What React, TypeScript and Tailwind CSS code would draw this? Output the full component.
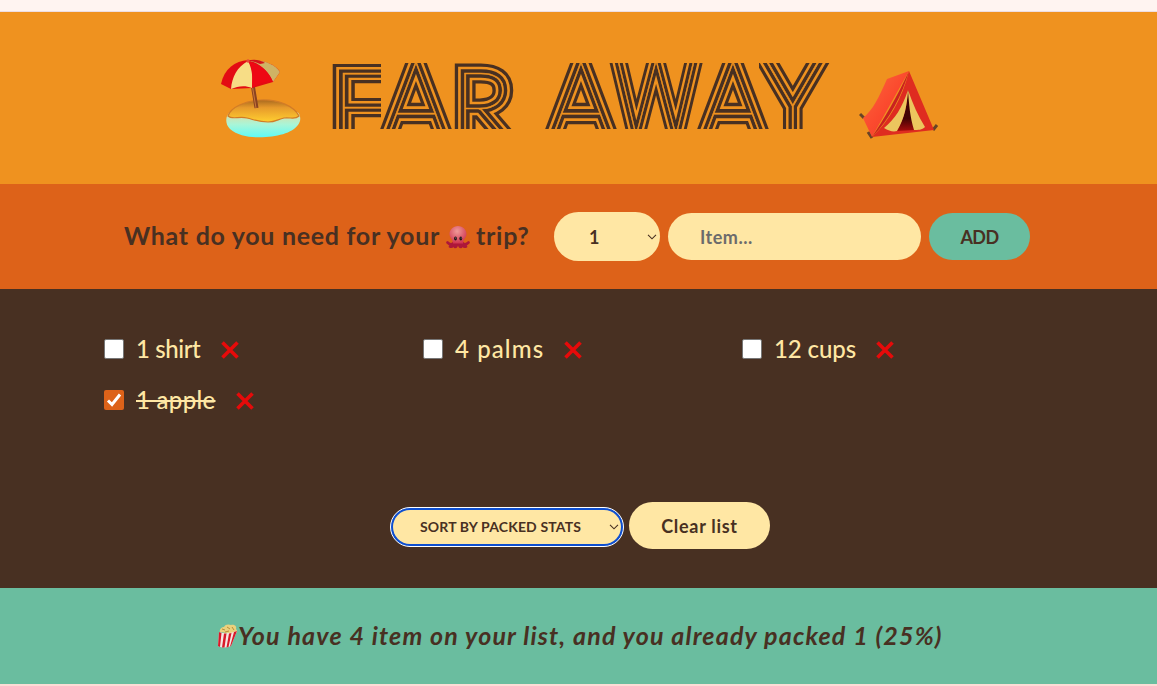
import React from "react";

const BROWN = "#483022";
const ORANGE = "#ef921f";

type Glyph = {
  id: string;
  ch: string;
  x: number;
  y: number;
  size: number;
  sx: number;
  clip: [number, number, number, number];
};

const glyphs: Glyph[] = [
  { id: "f", ch: "F", x: 330, y: 142, size: 98, sx: 1.15, clip: [328, 63, 53, 66] },
  { id: "a1", ch: "A", x: 383, y: 142, size: 115, sx: 0.9, clip: [374, 63, 90, 66] },
  { id: "r", ch: "R", x: 453, y: 142, size: 98, sx: 1.02, clip: [449, 63, 70, 66] },
  { id: "sp", ch: " ", x: 520, y: 142, size: 98, sx: 1, clip: [520, 63, 1, 1] },
  { id: "a2", ch: "A", x: 548, y: 142, size: 115, sx: 0.9, clip: [540, 63, 90, 66] },
  { id: "w", ch: "W", x: 615, y: 136, size: 108, sx: 0.76, clip: [606, 63, 102, 66] },
  { id: "a3", ch: "A", x: 700, y: 142, size: 115, sx: 0.9, clip: [691, 63, 90, 66] },
  { id: "y", ch: "Y", x: 762, y: 142, size: 120, sx: 0.9, clip: [759, 63, 75, 66] },
];

function Title() {
  return (
    <svg width="510" height="80" viewBox="325 56 510 80" role="img" aria-label="FAR AWAY">
      {glyphs.map((g) => (
        <g key={g.id}>
          <clipPath id={"clip-" + g.id}>
            <rect x={g.clip[0]} y={g.clip[1]} width={g.clip[2]} height={g.clip[3]} />
          </clipPath>
          <g clipPath={`url(#clip-${g.id})`} strokeLinejoin="miter">
            <g fill={BROWN} stroke={BROWN} strokeWidth="19.4">
              <text
                id={"glyph-" + g.id}
                transform={`translate(${g.x} ${g.y}) scale(${g.sx} 1)`}
                fontSize={g.size}
                fontFamily="Lato"
                fontWeight="100"
                vectorEffect="non-scaling-stroke"
                xmlSpace="preserve"
              >
                {g.ch}
              </text>
            </g>
            <use href={"#glyph-" + g.id} fill={ORANGE} stroke={ORANGE} strokeWidth="12.8" />
            <use href={"#glyph-" + g.id} fill={BROWN} stroke={BROWN} strokeWidth="7.6" />
            <use href={"#glyph-" + g.id} fill={ORANGE} stroke={ORANGE} strokeWidth="0.6" />
          </g>
        </g>
      ))}
    </svg>
  );
}

function Beach() {
  return (
    <svg width="80" height="80" viewBox="0 0 80 80">
      <defs>
        <linearGradient id="sea" x1="0" y1="0" x2="0" y2="1">
          <stop offset="0" stopColor="#e6d9a0" />
          <stop offset="0.5" stopColor="#a8f6d8" />
          <stop offset="1" stopColor="#5ffaf6" />
        </linearGradient>
        <linearGradient id="sand" x1="0" y1="0" x2="0" y2="1">
          <stop offset="0" stopColor="#a9691f" />
          <stop offset="0.35" stopColor="#e79a2b" />
          <stop offset="1" stopColor="#ffcf30" />
        </linearGradient>
      </defs>
      <path d="M9 53C4 57 4 65 9 70C18 78 33 79 45 78C61 77 76 72 79 62C80 57 78 54 76 53Z" fill="url(#sea)" />
      <path d="M7 57C10 48 24 42 39 41C57 40 73 47 78 57C74 61 69 58 63 59C57 60 55 63 47 63C38 63 34 61 26 59C18 57 11 61 7 57Z" fill="url(#sand)" stroke="#d17c27" strokeWidth="1.2" />
      <path d="M32 28L35.500 49" stroke="#8a4320" strokeWidth="4" />
      <path d="M31.500 28L35 49" stroke="#c9773c" strokeWidth="1" />
      <path d="M0 25C3 10 14 2 27 1C43 0 56 7 59 13L52 23L31 29L10 30Z" fill="#e30b13" />
      <path d="M27 2C16 8 11 18 10 30C17 27 24 26 31 29C32 18 31 9 27 2Z" fill="#f7dd86" />
      <path d="M28 2C37 3 47 11 52 23L59 13C54 5 41 0 28 2Z" fill="#cfb365" />
      <path d="M27 2C33 9 31 19 31 29C38 24 45 22 52 23C48 12 39 5 27 2Z" fill="#ee0714" />
      <path d="M27 1.500C33 0 39 1 44 4L39 5C35 3 31 2 27 1.500Z" fill="#d3121a" />
      <circle cx="27" cy="2" r="1.700" fill="#e64b36" />
    </svg>
  );
}

function Tent() {
  return (
    <svg width="80" height="72" viewBox="0 0 80 72">
      <defs>
        <linearGradient id="cloth" x1="0" y1="0" x2="1" y2="1">
          <stop offset="0" stopColor="#fb6a3e" />
          <stop offset="0.5" stopColor="#fb4a2e" />
          <stop offset="1" stopColor="#e8382a" />
        </linearGradient>
        <linearGradient id="dark" x1="0" y1="0" x2="0" y2="1">
          <stop offset="0" stopColor="#3c0505" />
          <stop offset="0.7" stopColor="#450404" />
          <stop offset="1" stopColor="#a80c0c" />
        </linearGradient>
      </defs>
      <path d="M1 45L5 49M9 63L13 69M78 56L74 61" stroke="#684327" strokeWidth="3" />
      <path d="M28 10L50 2L13 68L4 49C14 41 20 28 28 10Z" fill="url(#cloth)" />
      <path d="M50 2L75 61L13 68C30 52 43 30 50 2Z" fill="#df2c20" />
      <path d="M50 2C43 26 31 50 13 68C25 50 38 28 50 2Z" fill="#c92220" />
      <path d="M49 21L57 61L37 62C45 51 48 38 49 21Z" fill="url(#dark)" />
      <path d="M49 21C43 39 36 50 25 59C30 62 34 63 38 62C46 49 48 35 49 21Z" fill="#ecc65e" />
      <path d="M49 21C50 35 51 48 55 61C59 61 63 61 66 58C59 47 54 35 49 21Z" fill="#ecc65e" />
    </svg>
  );
}

function Octopus() {
  return (
    <svg className="mx-[6px] inline-block align-[-4px]" width="24" height="24" viewBox="0 0 24 24">
      <defs>
        <radialGradient id="head" cx="0.45" cy="0.3" r="0.7">
          <stop offset="0" stopColor="#f09a98" />
          <stop offset="1" stopColor="#cf3450" />
        </radialGradient>
      </defs>
      <path d="M9 15C8 19 5 21 1.500 17.500M15 15C16 19 19 21 22.500 17.500M9 17C9 21 6 22 4 21.500M15 17C15 21 18 22 20 21.500M11 18C11 21 10 22 9 22M13 18C13 21 14 22 15 22" stroke="#ad173a" strokeWidth="2.600" strokeLinecap="round" fill="none" />
      <path d="M12 1C7 1 3.500 5 3.500 9C3.500 13 7 14 7 18.500H17C17 14 20.500 13 20.500 9C20.500 5 17 1 12 1Z" fill="url(#head)" />
      <ellipse cx="9.500" cy="13.500" rx="1.400" ry="2" fill="#241316" />
      <ellipse cx="14.800" cy="13.500" rx="1.400" ry="2" fill="#241316" />
      <circle cx="9.800" cy="13" r=".4" fill="#fff" />
      <circle cx="15.100" cy="13" r=".4" fill="#fff" />
    </svg>
  );
}

function Popcorn() {
  return (
    <svg width="21" height="24" viewBox="0 0 21 24">
      <path d="M3 8C2 5 5 3 7 3C8 0 12 0 14 1C18 0 20 3 19 5C21 7 20 9 18 10Z" fill="#ead17d" />
      <path d="M5 5L8 6M10 3L13 5M15 3L17 6M8 8L12 7" stroke="#b88d39" strokeWidth="1" />
      <path d="M2 8Q10 11 20 7L14 22Q7 25 1 22Z" fill="#f4e7e3" />
      <path d="M2 8L4.500 9L3 23L1 22ZM7 9.500L9.500 9.500L7.500 23.500L5 23.500ZM12 9.500L14.500 9L11.500 23L9.500 23.500ZM17 8L20 7L14 22L13 22.500Z" fill="#d81a29" />
    </svg>
  );
}

function Chevron() {
  return (
    <svg width="10" height="6" viewBox="0 0 10 6" fill="none" stroke={BROWN} strokeWidth="1.1">
      <path d="M1 .8L5 4.8L9 .8" />
    </svg>
  );
}

type Row = { label: string; packed?: boolean; text: string };

const rows: Row[] = [
  { label: "1 shirt", text: "w-[65px] tracking-[-0.4px]" },
  { label: "4 palms", text: "w-[89px] tracking-[1.1px]" },
  { label: "12 cups", text: "w-[82px] tracking-[-0.1px]" },
  { label: "1 apple", packed: true, text: "w-[80px] tracking-[0.3px] line-through decoration-2" },
];

function Item({ label, packed, text }: Row) {
  return (
    <li className="flex h-8 items-center">
      <span
        role="checkbox"
        aria-checked={!!packed}
        className={
          packed
            ? "flex size-5 items-center justify-center rounded-[2px] bg-[#dd6219]"
            : "size-5 rounded-[2px] border border-[#767676] bg-white"
        }
      >
        {packed && (
          <svg width="16" height="16" viewBox="0 0 16 16" fill="none" stroke="#fff" strokeWidth="3">
            <path d="M2 8.5L6 12.5L14 2.5" />
          </svg>
        )}
      </span>
      <span className={"ml-3 whitespace-nowrap " + text}>{label}</span>
      <button className="mt-px ml-[19.5px]" aria-label="Delete">
        <svg width="18" height="18" viewBox="0 0 18 18" stroke="#e60a0a" strokeWidth="3.6">
          <path d="M1.5 1.5L16.5 16.5M16.5 1.5L1.5 16.5" />
        </svg>
      </button>
    </li>
  );
}

export default function App() {
  return (
    <div className="flex h-[686px] w-[1157px] flex-col overflow-hidden bg-[#fddcd5] font-['Lato',sans-serif] text-[#483022]">
      <div className="h-3 shrink-0 border-b border-[#eedde1] bg-[#fff4f1]" />
      <header className="flex h-[172px] shrink-0 items-start bg-[#ef921f] pl-[221px]">
        <div className="pt-[47px]"><Beach /></div>
        <h1 className="ml-6 pt-11"><Title /></h1>
        <div className="ml-6 pt-[57px]"><Tent /></div>
      </header>
      <form className="flex h-[105px] shrink-0 items-center bg-[#dd6219] pl-[124px]">
        <h3 className="mb-[3px] w-[430px] whitespace-nowrap text-[25px] leading-8 font-bold tracking-[0.71px]">
          What do you need for your<Octopus />trip?
        </h3>
        <div className="flex h-[49px] w-[106px] items-center rounded-full bg-[#ffe7a4] pr-[3px] pl-[35px] text-lg font-bold">
          <span className="flex-1">1</span>
          <Chevron />
        </div>
        <div className="ml-2 flex h-[47px] w-[253px] items-center rounded-full bg-[#ffe7a4] pl-8 text-lg font-bold tracking-[0.5px] text-[#6c6b6b]">
          Item...
        </div>
        <button type="button" className="ml-2 h-[47px] w-[101px] rounded-full bg-[#6abd9f] text-lg font-bold tracking-[-0.6px]">ADD</button>
      </form>
      <main className="flex h-[299px] shrink-0 flex-col bg-[#483022]">
        <ul className="grid grid-cols-[319px_319px_319px] gap-y-[19px] pt-11 pl-[104px] text-2xl font-medium text-[#ffe7a4]">
          {rows.map((r) => <Item key={r.label} {...r} />)}
        </ul>
        <div className="mt-auto mb-[39px] flex h-[47px] items-center pl-[390px]">
          <div className="mt-0.5 flex h-10 w-[234px] items-center rounded-full border border-white bg-[#0e4fd0] p-0.5">
            <div className="flex h-full w-full items-center rounded-full bg-[#ffe7a4] pr-0.5 pl-[27px] text-sm font-bold tracking-[0.15px]">
              <span className="flex-1 whitespace-nowrap">SORT BY PACKED STATS</span>
              <Chevron />
            </div>
          </div>
          <button className="ml-[5px] h-[47px] w-[141px] rounded-full bg-[#ffe7a4] text-lg font-bold tracking-[0.7px]">Clear list</button>
        </div>
      </main>
      <footer className="flex h-24 shrink-0 items-center bg-[#6abd9f] pl-[217px]">
        <Popcorn />
        <em className="mb-0.5 whitespace-nowrap text-[25px] leading-8 font-bold italic tracking-[1.17px]">
          You have 4 item on your list, and you already packed 1 (25%)
        </em>
      </footer>
    </div>
  );
}
